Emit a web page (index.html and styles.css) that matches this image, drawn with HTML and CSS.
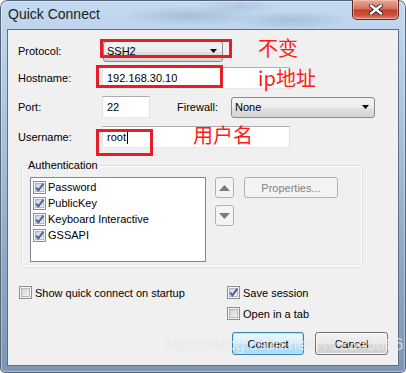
FILE: index.html
```html
<!DOCTYPE html>
<html lang="en">
<head>
  <meta charset="UTF-8" />
  <title>Quick Connect</title>
  <link rel="stylesheet" href="styles.css">
</head>
<body>

  <svg class="defs" width="0" height="0">
    <defs>
      <linearGradient id="cb-fill" x1="0" y1="0" x2="1" y2="1">
        <stop offset="0" stop-color="#cbcfd5" />
        <stop offset="1" stop-color="#f6f6f6" />
      </linearGradient>
      <symbol id="cb-off" viewBox="0 0 13 13">
        <rect x="0.5" y="0.5" width="12" height="12" fill="#f4f4f4" stroke="#8e8f8f" />
        <rect x="2.5" y="2.5" width="8" height="8" fill="url(#cb-fill)" stroke="#b4b8bd" />
      </symbol>
      <symbol id="cb-on" viewBox="0 0 13 13">
        <rect x="0.5" y="0.5" width="12" height="12" fill="#f4f4f4" stroke="#8e8f8f" />
        <rect x="2.5" y="2.5" width="8" height="8" fill="url(#cb-fill)" stroke="#b4b8bd" />
        <path d="M3.2 6.6 L5.4 9.4 L10.4 2.6" fill="none" stroke="#4a5f9e" stroke-width="1.9" />
      </symbol>
      <symbol id="drop" viewBox="0 0 7 4">
        <polygon points="0,0 7,0 3.5,4" fill="#000" />
      </symbol>
    </defs>
  </svg>

  <div class="window">
    <div class="titlebar">
      <span class="title">Quick Connect</span>
      <div class="close">
        <svg width="14" height="11" viewBox="0 0 14 11">
          <path d="M2 1.5 L12 9.5 M12 1.5 L2 9.5" stroke="#3a2320" stroke-width="4.2" stroke-linecap="round" />
          <path d="M2 1.5 L12 9.5 M12 1.5 L2 9.5" stroke="#fff" stroke-width="2.4" stroke-linecap="round" />
        </svg>
      </div>
    </div>

    <div class="client">
      <div class="row">
        <label class="lbl">Protocol:</label>
        <div class="combo combo-protocol">
          <span>SSH2</span>
          <svg class="arrow"><use href="#drop" /></svg>
        </div>
      </div>

      <div class="row row-host">
        <label class="lbl">Hostname:</label>
        <div class="field field-wide">192.168.30.10</div>
      </div>

      <div class="row row-port">
        <label class="lbl">Port:</label>
        <div class="field field-port">22</div>
        <label class="lbl-firewall">Firewall:</label>
        <div class="combo combo-firewall">
          <span>None</span>
          <svg class="arrow"><use href="#drop" /></svg>
        </div>
      </div>

      <div class="row row-user">
        <label class="lbl">Username:</label>
        <div class="field field-wide">root<span class="caret"></span></div>
      </div>

      <div class="group">
        <span class="legend">Authentication</span>
        <ul class="auth-list">
          <li><svg class="cb"><use href="#cb-on" /></svg>Password</li>
          <li><svg class="cb"><use href="#cb-on" /></svg>PublicKey</li>
          <li><svg class="cb"><use href="#cb-on" /></svg>Keyboard Interactive</li>
          <li><svg class="cb"><use href="#cb-on" /></svg>GSSAPI</li>
        </ul>
        <div class="order-btns">
          <div class="btn btn-off btn-order">
            <svg width="11" height="6" viewBox="0 0 11 6"><polygon points="0,6 11,6 5.5,0" fill="#7b7b7b" /></svg>
          </div>
          <div class="btn btn-off btn-order">
            <svg width="11" height="6" viewBox="0 0 11 6"><polygon points="0,0 11,0 5.5,6" fill="#7b7b7b" /></svg>
          </div>
        </div>
        <div class="btn btn-off btn-props">Properties...</div>
      </div>

      <div class="bottom">
        <div class="check check-startup"><svg class="cb"><use href="#cb-off" /></svg>Show quick connect on startup</div>
        <div class="right-col">
          <div class="check"><svg class="cb"><use href="#cb-on" /></svg>Save session</div>
          <div class="check check-tab"><svg class="cb"><use href="#cb-off" /></svg>Open in a tab</div>
          <div class="actions">
            <div class="btn btn-push btn-default">Connect</div>
            <div class="btn btn-push btn-cancel">Cancel</div>
          </div>
        </div>
      </div>

      <!-- red annotations drawn over the dialog -->
      <div class="mark mark-protocol"></div>
      <div class="mark mark-host"></div>
      <div class="mark mark-user"></div>
      <span class="note note-protocol">不变</span>
      <span class="note note-host">ip地址</span>
      <span class="note note-user">用户名</span>

      <span class="watermark">https://blog.csdn.net/IT12345666</span>
    </div>
  </div>

</body>
</html>
```

FILE: styles.css
```css
body {
  margin: 0;
  overflow: hidden;
  background: #fff;
}

.defs {
  position: absolute;
}

.window {
  width: 406px;
  height: 373px;
  box-sizing: border-box;
  padding: 0 7px 7px;
  display: flex;
  flex-direction: column;
  border-radius: 7px 7px 5px 5px;
  background:
    radial-gradient(ellipse 70px 10px at 190px 16px, rgba(70, 100, 140, 0.22), transparent),
    radial-gradient(ellipse 60px 9px at 290px 20px, rgba(70, 100, 140, 0.2), transparent),
    radial-gradient(ellipse 40px 8px at 240px 6px, rgba(70, 100, 140, 0.16), transparent),
    linear-gradient(to bottom, #c4daf0 0%, #b8d0ea 14%, #a6c0dd 38%, #90a9c7 68%, #7c97b6 100%);
  box-shadow: inset 0 0 0 1px #56657a, inset 0 0 0 2px rgba(255, 255, 255, 0.35);
}

.titlebar {
  height: 29px;
  display: flex;
  align-items: flex-start;
}

.title {
  margin: 6px 0 0 1px;
  font: 14px "Liberation Sans", sans-serif;
  color: #1b1b1b;
}

.close {
  margin-left: auto;
  width: 47px;
  height: 20px;
  box-sizing: border-box;
  border: 1px solid #5b2a24;
  border-top: none;
  border-radius: 0 0 5px 5px;
  background: linear-gradient(#e8a898 0%, #d9745f 45%, #c43f29 52%, #c9503a 80%, #e08b70 100%);
  box-shadow: inset 0 0 0 1px rgba(255, 220, 210, 0.45);
  display: flex;
  justify-content: center;
  align-items: center;
}

.client {
  flex: 1;
  position: relative;
  background: #f0f0f0;
  border: 1px solid #5e6f85;
  padding: 10px 0 0 10px;
  font: 11px "Liberation Sans", sans-serif;
  color: #000;
}

.row {
  display: flex;
  align-items: center;
  height: 22px;
}

.row-host {
  margin-top: 5px;
}

.row-port {
  margin-top: 7px;
}

.row-user {
  margin-top: 8px;
}

.lbl {
  width: 84px;
}

.lbl-firewall {
  width: 54px;
  margin-left: 27px;
}

.combo {
  height: 21px;
  box-sizing: border-box;
  display: flex;
  align-items: center;
  justify-content: space-between;
  padding: 0 5px 0 3px;
  border: 1px solid #8a8a8a;
  border-radius: 3px;
  background: linear-gradient(#f3f3f3 0%, #ececec 50%, #e0e0e0 51%, #d6d6d6 100%);
}

.combo-protocol {
  width: 120px;
  margin-left: 1px;
}

.combo-firewall {
  width: 144px;
}

.arrow {
  width: 7px;
  height: 4px;
}

.field {
  height: 22px;
  box-sizing: border-box;
  display: flex;
  align-items: center;
  padding-left: 4px;
  background: #fff;
  border: 1px solid;
  border-color: #abadb3 #dbdfe6 #e3e9ef #e2e3ea;
}

.field-wide {
  width: 188px;
}

.field-port {
  width: 48px;
}

.caret {
  width: 1px;
  height: 13px;
  margin-left: 1px;
  background: #000;
}

.group {
  position: relative;
  margin: 17px 0 0 3px;
  width: 342px;
  height: 103px;
  box-sizing: border-box;
  padding: 11px 0 0 8px;
  display: flex;
  align-items: flex-start;
  border: 1px solid #d5dfe5;
  border-radius: 3px;
  box-shadow: inset 0 0 0 1px #fff;
}

.legend {
  position: absolute;
  top: -7px;
  left: 4px;
  padding: 0 2px;
  line-height: 13px;
  background: #f0f0f0;
}

.auth-list {
  width: 176px;
  height: 85px;
  box-sizing: border-box;
  margin: 0;
  padding: 1px 0 0 2px;
  list-style: none;
  background: #fff;
  border: 1px solid #828790;
}

.auth-list li {
  height: 16px;
  display: flex;
  align-items: center;
  gap: 2px;
}

.cb {
  width: 13px;
  height: 13px;
  flex: none;
}

.btn {
  box-sizing: border-box;
  display: flex;
  align-items: center;
  justify-content: center;
  border: 1px solid #707070;
  border-radius: 3px;
  background: linear-gradient(#f2f2f2 0%, #ebebeb 50%, #dddddd 51%, #cfcfcf 100%);
  box-shadow: inset 0 0 0 1px #fcfcfc;
}

.btn-off {
  border-color: #adb2b5;
  background: #f4f4f4;
  box-shadow: none;
  color: #838383;
}

.order-btns {
  display: flex;
  flex-direction: column;
  gap: 7px;
  margin-left: 9px;
}

.btn-order {
  width: 19px;
  height: 21px;
}

.btn-props {
  width: 94px;
  height: 21px;
  margin-left: 10px;
}

.bottom {
  display: flex;
  margin: 18px 0 0 1px;
}

.check {
  display: flex;
  align-items: center;
  gap: 3px;
  height: 13px;
}

.check-startup {
  width: 208px;
}

.right-col {
  display: flex;
  flex-direction: column;
}

.check-tab {
  margin-top: 8px;
}

.actions {
  display: flex;
  gap: 11px;
  margin: 12px 0 0 5px;
}

.btn-push {
  width: 72px;
  height: 23px;
}

.btn-cancel {
  width: 73px;
}

.btn-default {
  border-color: #3c7fb1;
  background: linear-gradient(#eaf6fd 0%, #d9f0fc 50%, #bee6fd 51%, #a7d9f5 100%);
  box-shadow: inset 0 0 0 1px #c3e5f9;
}

.mark {
  position: absolute;
  box-sizing: border-box;
  border: 3px solid #e61e26;
}

.mark-protocol {
  left: 92px;
  top: 9px;
  width: 132px;
  height: 19px;
}

.mark-host {
  left: 88px;
  top: 35px;
  width: 127px;
  height: 23px;
}

.mark-user {
  left: 88px;
  top: 99px;
  width: 57px;
  height: 27px;
}

.note {
  position: absolute;
  font: 20px "Noto Sans CJK SC", sans-serif;
  line-height: 24px;
  color: #ff1a1a;
}

.note-protocol {
  left: 250px;
  top: 6px;
}

.note-host {
  left: 250px;
  top: 36px;
}

.note-user {
  left: 185px;
  top: 93px;
}

.watermark {
  position: absolute;
  left: 157px;
  top: 305px;
  font: 17px "Liberation Sans", sans-serif;
  letter-spacing: -0.3px;
  color: rgba(255, 255, 255, 0.7);
  text-shadow: 0 0 1px rgba(0, 0, 0, 0.15);
}
```
